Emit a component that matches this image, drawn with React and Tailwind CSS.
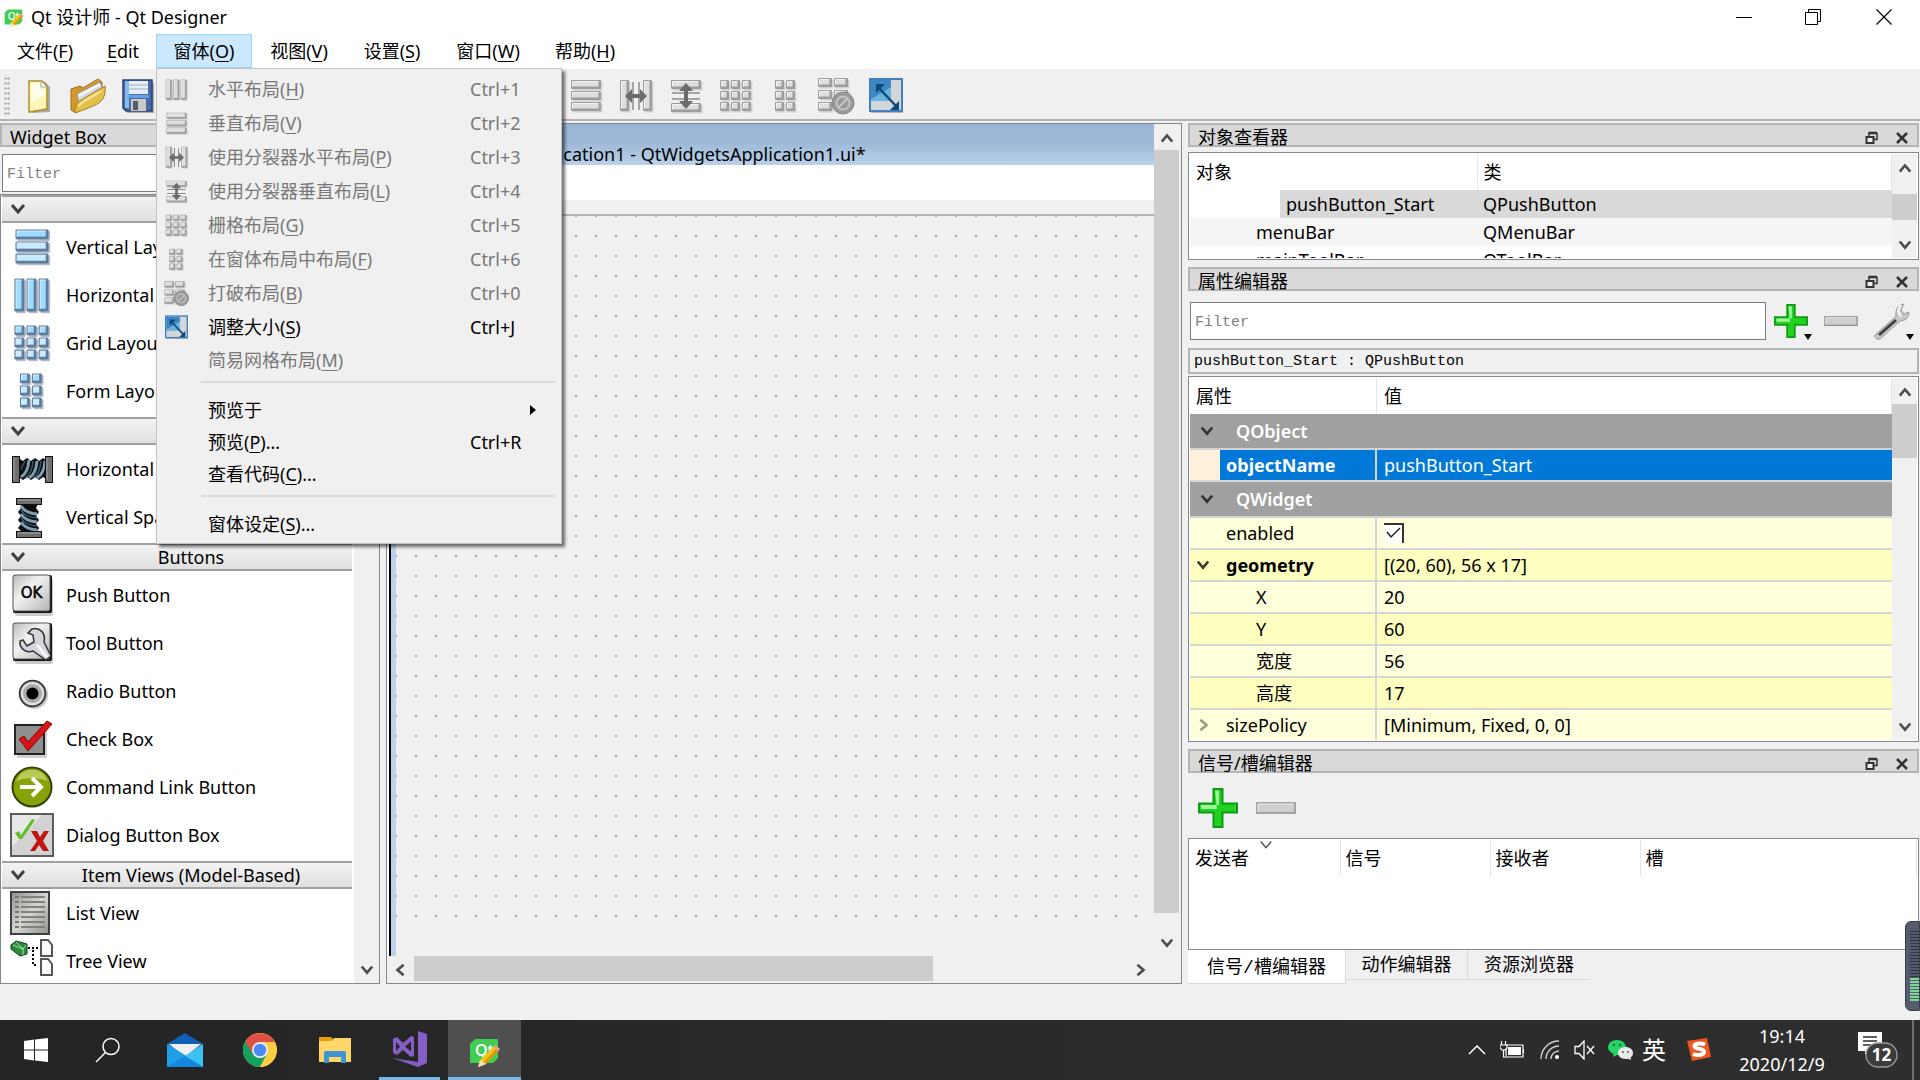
import React from "react";

const UI = "font-['Noto_Sans','Noto_Sans_CJK_SC',sans-serif]";
const MONO = "font-['Liberation_Mono','Noto_Sans_CJK_SC',monospace]";

/* ---------- layout glyphs ---------- */

const ROWS = [[5, 4, 30, 9], [5, 15, 30, 9], [5, 26, 30, 9]];
const COLS = [[4, 5, 9, 30], [15, 5, 9, 30], [26, 5, 9, 30]];
const GRID = [4, 15, 26].flatMap((y) => [4, 15, 26].map((x) => [x, y, 9, 9]));
const FORM = [4, 15, 26].flatMap((y) => [9, 20].map((x) => [x, y, 9, 9]));
const BREAK = [[2, 2, 14, 9], [18, 2, 14, 9], [2, 14, 14, 9], [18, 14, 14, 9], [2, 26, 14, 9]];

function Cells({ cells, tone = "gray" }) {
  const blue = tone === "blue";
  return cells.map(([x, y, w, h], i) => (
    <g key={i}>
      <rect x={x + 1.5} y={y + 1.5} width={w} height={h} rx="1" fill={blue ? "#b4bbc6" : "#d0d0d0"} />
      <rect x={x} y={y} width={w} height={h} rx="1" fill={blue ? "#5f7c9f" : "#9c9c9c"} />
      <rect x={x + 1.5} y={y + 1.5} width={w - 4} height={h - 4} fill={blue ? (y < 12 ? "#9bdcff" : "#c6ebff") : "#dedede"} />
      <path d={`M${x + 1.5} ${y + h - 2.5}V${y + 1.5}H${x + w - 2.5}`} fill="none" stroke={blue ? "#d9f2ff" : "#f4f4f4"} />
    </g>
  ));
}

function LayoutIcon({ kind, tone, className = "size-10" }) {
  return (
    <svg viewBox="0 0 40 40" className={className} aria-hidden="true">
      {kind === "rows" && <Cells cells={ROWS} tone={tone} />}
      {kind === "cols" && <Cells cells={COLS} tone={tone} />}
      {kind === "grid" && <Cells cells={GRID} tone={tone} />}
      {kind === "form" && <Cells cells={FORM} tone={tone} />}
      {kind === "hsplit" && (
        <>
          <Cells cells={[[4, 4, 9, 31], [27, 4, 9, 31]]} />
          <path d="M17 6v28M23 6v28" stroke="#8a8a8a" strokeWidth="1.5" />
          <path d="M9 20l7-7v5h8v-5l7 7-7 7v-5h-8v5z" fill="#6b6b6b" />
        </>
      )}
      {kind === "vsplit" && (
        <>
          <Cells cells={[[5, 4, 30, 9], [5, 27, 30, 9]]} />
          <path d="M6 17h28M6 23h28" stroke="#8a8a8a" strokeWidth="1.5" />
          <path d="M20 7l7 8h-5v10h5l-7 8-7-8h5V15h-5z" fill="#6b6b6b" />
        </>
      )}
      {kind === "break" && (
        <>
          <Cells cells={BREAK} />
          <circle cx="27" cy="27" r="11" fill="#9a9a9a" stroke="#848484" />
          <circle cx="27" cy="27" r="6.500" fill="none" stroke="#c4c4c4" strokeWidth="2" />
          <path d="M22.500 31.500l9-9" stroke="#c4c4c4" strokeWidth="2" />
        </>
      )}
      {kind === "adjust" && (
        <>
          <rect x="5" y="4" width="32" height="33" fill="#b5b5b5" />
          <rect x="4" y="3" width="32" height="32" fill="#d3d6d9" stroke="#3f7fc0" strokeWidth="2" />
          <rect x="5" y="4" width="20" height="21" fill="#69b4dc" />
          <path d="M5 4h20v7L5 23z" fill="#3f86c4" />
          <path d="M11 10l20 21" stroke="#0d4a78" strokeWidth="2.500" />
          <path d="M10 8h9l-9 9zM33 34h-9l9-9z" fill="#0d4a78" />
        </>
      )}
    </svg>
  );
}

/* ---------- toolbar file icons ---------- */

const NewIcon = () => (
  <svg viewBox="0 0 40 40" className="size-10" aria-hidden="true">
    <path d="M13 6h14l5 5v25l-18 1z" fill="#a9a9a9" />
    <path d="M11 5h13l5 5v23l-18 3z" fill="#fdf6b5" stroke="#b58f2a" strokeWidth="1.500" />
    <path d="M13 7h9v6h5v6L13 26z" fill="#fffdee" />
    <path d="M23 5l6 6h-6z" fill="#fff" stroke="#a8a8a8" />
  </svg>
);

const OpenIcon = () => (
  <svg viewBox="0 0 40 40" className="size-10" aria-hidden="true">
    <path d="M3 13l9-3 3 2L30 3l4 3v7L8 37l-5-3z" fill="#d49a2a" stroke="#9d7018" />
    <path d="M9 18L32 6l3 8L12 30z" fill="#f4f4f4" stroke="#8c8c8c" />
    <path d="M10 22L33 9l1 4-22 15z" fill="#d5d8dc" />
    <path d="M7 37c0-8 2-11 8-14l8-5 14-8c1 7-1 12-4 15-3 4-9 5-15 8z" fill="#e3bf4c" stroke="#a87c1c" />
    <path d="M11 30c2-4 14-10 23-15" stroke="#f6e7a0" strokeWidth="2" fill="none" />
  </svg>
);

const SaveIcon = () => (
  <svg viewBox="0 0 40 40" className="size-10" aria-hidden="true">
    <path d="M7 7h29v30H9z" fill="#a8adb5" />
    <path d="M5 4h29v31H8l-3-3z" fill="#4a6aa5" stroke="#2c4271" strokeWidth="1.500" />
    <path d="M7 5h4v27H7z" fill="#86b9ec" />
    <rect x="11" y="5" width="19" height="13" fill="#e6eef6" />
    <path d="M11 9h19M11 13h19" stroke="#9db0c6" />
    <rect x="9" y="19" width="22" height="3" fill="#5ea4e6" />
    <rect x="13" y="23" width="15" height="12" fill="#c9c9c9" />
    <rect x="15" y="25" width="5" height="9" fill="#555b68" />
  </svg>
);

const QtIcon = ({ className }) => (
  <svg viewBox="0 0 32 32" className={className} aria-hidden="true">
    <path d="M6 4h23v19l-5 5H1V9z" fill="#41cd52" />
    <text x="6" y="21" fontSize="16" fontWeight="600" fontFamily="Open Sans" fill="#fff">Qt</text>
    <path d="M26 10l5 4-14 15-7 3 1-7z" fill="#f4c614" />
    <path d="M26 10l5 4-2 2-5-4z" fill="#d9a0a0" />
    <path d="M29 16l-12 13-2-2 12-13z" fill="#e0920c" />
    <path d="M11 25l6 4-8 3z" fill="#f3e3c2" />
  </svg>
);

/* ---------- widget box icons ---------- */

const Frame = ({ children }) => (
  <svg viewBox="0 0 44 44" className="size-11" aria-hidden="true">{children}</svg>
);

const HSpacer = () => (
  <Frame>
    <path d="M10 12l3 2 4-3 4 3 4-3 4 3 4-3 3 2v19l-3-2-4 3-4-3-4 3-4-3-4 3-3-2z" fill="#0b0f12" />
    <path d="M11 30q7-4 8-17M19 31q7-4 8-17M27 31q7-4 8-17" stroke="#7f9fb2" strokeWidth="3" fill="none" />
    <path d="M11 22l4-8M15 31q7-4 8-17M23 31q7-4 8-17" stroke="#3d5a6b" strokeWidth="1.500" fill="none" />
    <rect x="2.500" y="9.500" width="7" height="26" fill="#6f6f6f" stroke="#111" />
    <rect x="35.500" y="9.500" width="7" height="26" fill="#6f6f6f" stroke="#111" />
    <path d="M4 11v22M37 11v22" stroke="#a6a6a6" />
  </Frame>
);

const VSpacer = () => (
  <Frame>
    <path d="M11 9h17l-2 4 3 4-3 4 3 4-3 4 3 4-2 3H11l-3-3 3-4-3-4 3-4-3-4 3-4z" fill="#0b0f12" />
    <path d="M11 11q4 7 16 8M11 19q4 7 16 8M11 27q4 7 16 8" stroke="#7f9fb2" strokeWidth="3" fill="none" />
    <path d="M11 15q4 7 16 8M11 23q4 7 16 8" stroke="#3d5a6b" strokeWidth="1.500" fill="none" />
    <rect x="6.500" y="3.500" width="25" height="6" fill="#6f6f6f" stroke="#111" />
    <rect x="6.500" y="36.500" width="25" height="6" fill="#6f6f6f" stroke="#111" />
    <path d="M8 5h22M8 38h22" stroke="#a6a6a6" />
  </Frame>
);

const Plate = () => (
  <>
    <defs>
      <linearGradient id="plate" x1="0" y1="0" x2="1" y2="1">
        <stop offset="0" stopColor="#b9b9b9" />
        <stop offset="0.400" stopColor="#f2f2f2" />
        <stop offset="1" stopColor="#b4b4b4" />
      </linearGradient>
    </defs>
    <rect x="5" y="5" width="38" height="38" rx="3" fill="#c9c9c9" />
    <rect x="3" y="2" width="39" height="38" rx="2" fill="#111" />
    <rect x="3" y="2" width="37" height="36" rx="2" fill="url(#plate)" stroke="#555" />
  </>
);

const PushIcon = () => (
  <Frame>
    <Plate />
    <text x="21.500" y="25" textAnchor="middle" fontSize="15" fontFamily="DejaVu Sans" fill="#000" stroke="#000" strokeWidth="0.500">OK</text>
  </Frame>
);

const ToolIcon = () => (
  <Frame>
    <Plate />
    <path d="M22 8c8-2 14 4 12 13l7 14-5 4-13-9c-8 3-14-4-13-10l3-1 4 6 7-4-1-7-5-2z" fill="#d5d5de" stroke="#333" strokeWidth="1.500" />
    <path d="M27 24l10 12" stroke="#f8f8f8" strokeWidth="3" />
  </Frame>
);

const RadioIcon = () => (
  <Frame>
    <circle cx="24" cy="26" r="14" fill="#c8c8c8" />
    <circle cx="22.500" cy="24.500" r="13" fill="#8f8f8f" stroke="#333" strokeWidth="1.500" />
    <circle cx="22.500" cy="24.500" r="10.500" fill="#a9a9a9" stroke="#e0e0e0" strokeWidth="2" />
    <circle cx="22.500" cy="24.500" r="6" fill="#000" />
  </Frame>
);

const CheckIcon = () => (
  <Frame>
    <rect x="7" y="11" width="30" height="30" fill="#cfcfcf" />
    <rect x="5" y="8" width="29" height="29" fill="#8f8f8f" stroke="#222" strokeWidth="2" />
    <path d="M9 22l5-3 4 6L37 4l5 3-24 27z" fill="#d81414" stroke="#7c0a0a" />
  </Frame>
);

const CommandIcon = () => (
  <Frame>
    <circle cx="22" cy="22" r="19.500" fill="#86a30a" stroke="#33400a" strokeWidth="2" />
    <path d="M6 16a17 17 0 0 1 32 0q-16-6-32 0z" fill="#b6cb5a" />
    <path d="M10 22h20M22 13l9 9-9 9" fill="none" stroke="#fff" strokeWidth="4" />
  </Frame>
);

const DialogIcon = () => (
  <Frame>
    <rect x="1" y="1" width="42" height="42" fill="#d2d2d2" stroke="#5c5c5c" strokeWidth="2" />
    <path d="M2 2h30L2 34z" fill="#e8e8e8" />
    <path d="M5 20l4-2 2 4L22 6l3 1-13 19H9z" fill="#5fbf26" />
    <path d="M21 18h6l3 6 4-6h5l-6 10 6 10h-6l-4-6-4 6h-5l7-10z" fill="#c11414" />
  </Frame>
);

const ListIcon = () => (
  <Frame>
    <defs>
      <linearGradient id="sheet" x1="0" y1="0" x2="1" y2="1">
        <stop offset="0" stopColor="#8f8f8c" />
        <stop offset="0.500" stopColor="#d6d6d2" />
        <stop offset="1" stopColor="#8f8f8c" />
      </linearGradient>
    </defs>
    <rect x="1" y="1" width="38" height="42" fill="url(#sheet)" stroke="#3f3f3f" strokeWidth="2" />
    <path d="M11 6h24M11 11h24M11 16h24M11 21h24M11 26h24M11 31h24M11 36h24" stroke="#80807c" strokeWidth="2" />
    <path d="M5 6h4M5 11h4M5 16h4M5 21h4M5 26h4M5 31h4M5 36h4" stroke="#77776f" strokeWidth="2" />
  </Frame>
);

const TreeIcon = () => (
  <Frame>
    <path d="M1 6l5-4 11 3v10l-7 2-9-7z" fill="#2c8a3c" stroke="#0c4317" />
    <path d="M3 6l10 4 3-4M6 3l7 7v6" stroke="#a6dfae" fill="none" />
    <path d="M18 9h10M23 11v15h5" stroke="#000" strokeWidth="2" strokeDasharray="2 2" fill="none" />
    <path d="M31 1h7l4 5v11H31z" fill="#fafafa" stroke="#555" strokeWidth="2" />
    <path d="M31 20h7l4 5v11H31z" fill="#fafafa" stroke="#555" strokeWidth="2" />
  </Frame>
);

/* ---------- small shared parts ---------- */

const Chevron = ({ dir = "down", className = "w-3.5", color = "#4d4d4d", stroke = 3 }) => {
  const d = { down: "M2 4l6 7 6-7", up: "M2 11l6-7 6 7", left: "M11 2L4 8l7 6", right: "M5 2l7 6-7 6" }[dir];
  return (
    <svg viewBox="0 0 16 16" className={className} aria-hidden="true">
      <path d={d} fill="none" stroke={color} strokeWidth={stroke} />
    </svg>
  );
};

function VScroll({ before, size, after, hideThumb }) {
  return (
    <div className="flex w-[25px] shrink-0 flex-col bg-[#f0f0f0]">
      <button className="flex h-[26px] shrink-0 items-center justify-center pt-1" aria-label="Scroll up">{!hideThumb && <Chevron dir="up" />}</button>
      <div className="flex min-h-0 flex-1 flex-col">
        <div style={{ flexGrow: before }} />
        <div className={hideThumb ? "" : "bg-[#cdcdcd]"} style={{ flexGrow: size }} />
        <div style={{ flexGrow: after }} />
      </div>
      <button className="flex h-[26px] shrink-0 items-center justify-center" aria-label="Scroll down"><Chevron /></button>
    </div>
  );
}

function DockTitle({ title, buttons = true }) {
  return (
    <div className="flex h-6 shrink-0 items-center border-2 border-[#b4b4b4] bg-[#d9d9d9] pl-2 pr-2">
      <h2 className="flex-1 pt-1 text-[18px] leading-6">{title}</h2>
      {buttons && (
        <div className="flex items-center gap-4 pt-1.5">
          <button aria-label="Float">
            <svg viewBox="0 0 14 14" className="size-3.5" aria-hidden="true">
              <path d="M4 2.500h8v6h-3M4 1.500h8M4 1v4" fill="none" stroke="#333" strokeWidth="1.500" />
              <rect x="1.500" y="6" width="7" height="6" fill="#eee" stroke="#333" strokeWidth="2" />
            </svg>
          </button>
          <button aria-label="Close">
            <svg viewBox="0 0 14 14" className="size-3.5" aria-hidden="true"><path d="M2 2l10 10M12 2L2 12" stroke="#333" strokeWidth="2.500" /></svg>
          </button>
        </div>
      )}
    </div>
  );
}

const Plus = ({ className }) => (
  <svg viewBox="0 0 40 40" className={className} aria-hidden="true">
    <path d="M15.500 1h9v14.500H39v9H24.500V39h-9V24.500H1v-9h14.500z" fill="#1fd21f" stroke="#0f9a14" strokeWidth="2" />
    <path d="M17 2.500h4V17H3v4h16z" fill="#a4f59c" />
  </svg>
);

const Minus = ({ className }) => (
  <svg viewBox="0 0 40 12" className={className} aria-hidden="true">
    <rect x="1" y="1" width="38" height="10" fill="#cfcfcf" stroke="#8e8e8e" strokeWidth="1.500" />
    <path d="M2 10V2h36" fill="none" stroke="#f4f4f4" />
  </svg>
);

const Mn = ({ text, k }) => {
  if (!k) return <span>{text}</span>;
  const i = text.indexOf(k);
  return (
    <span>
      {text.slice(0, i)}
      <span className="underline decoration-1 underline-offset-3">{k}</span>
      {text.slice(i + 1)}
    </span>
  );
};

/* ---------- menu ---------- */

const MENU = [
  { t: "水平布局(H)", k: "H", s: "Ctrl+1", icon: "cols", off: true },
  { t: "垂直布局(V)", k: "V", s: "Ctrl+2", icon: "rows", off: true },
  { t: "使用分裂器水平布局(P)", k: "P", s: "Ctrl+3", icon: "hsplit", off: true },
  { t: "使用分裂器垂直布局(L)", k: "L", s: "Ctrl+4", icon: "vsplit", off: true },
  { t: "栅格布局(G)", k: "G", s: "Ctrl+5", icon: "grid", off: true },
  { t: "在窗体布局中布局(F)", k: "F", s: "Ctrl+6", icon: "form", off: true },
  { t: "打破布局(B)", k: "B", s: "Ctrl+0", icon: "break", off: true },
  { t: "调整大小(S)", k: "S", s: "Ctrl+J", icon: "adjust" },
  { t: "简易网格布局(M)", k: "M", off: true, short: true },
  null,
  { t: "预览于", sub: true, short: true },
  { t: "预览(P)...", k: "P", s: "Ctrl+R", short: true },
  { t: "查看代码(C)...", k: "C", short: true },
  null,
  { t: "窗体设定(S)...", k: "S", short: true },
];

function FormMenu() {
  return (
    <div role="menu" className="absolute left-0 top-full z-20 w-[406px] border border-[#c3c3c3] bg-[#f0f0f0] pb-[3px] pt-[3px] text-[18px] leading-6 shadow-[3px_3px_3px_rgba(0,0,0,0.55)]">
      {MENU.map((m, i) =>
        m === null ? (
          <div key={i} role="separator" className="h-[18px] pl-11 pr-1.5 pt-[5px]">
            <div className="h-0.5 bg-[#dadada]" />
          </div>
        ) : (
          <button
            key={i}
            role="menuitem"
            disabled={m.off}
            className={`flex w-full items-center pl-1.5 text-left ${m.short ? "h-8" : "h-[34px]"} ${m.off ? "text-[#787878]" : "text-black"}`}
          >
            <span className="w-[45px] shrink-0">{m.icon && <LayoutIcon kind={m.icon} className="size-[27px]" />}</span>
            <span className="flex-1"><Mn text={m.t} k={m.k} /></span>
            {m.s && <span className="w-[91px]">{m.s}</span>}
            {m.sub && <svg viewBox="0 0 6 10" className="mr-[25px] w-1.5" aria-hidden="true"><path d="M0 0l6 5-6 5z" /></svg>}
          </button>
        )
      )}
    </div>
  );
}

const BAR = [
  ["文件(F)", "F", "w-[90px]"],
  ["Edit", "E", "w-[66px]"],
  ["窗体(O)", "O", "w-24"],
  ["视图(V)", "V", "w-[94px]"],
  ["设置(S)", "S", "w-[92px]"],
  ["窗口(W)", "W", "w-[100px]"],
  ["帮助(H)", "H", "w-[94px]"],
];

function MenuBar() {
  return (
    <nav className="flex h-[34px] shrink-0 bg-white text-[18px] leading-6" aria-label="Menu">
      {BAR.map(([t, k, w]) => {
        const open = k === "O";
        return (
          <div key={k} className={`relative flex ${w}`}>
            <button className={`flex-1 text-center ${open ? "border border-[#99d1ff] bg-[#cce8ff]" : ""}`} aria-expanded={open}>
              <Mn text={t} k={k} />
            </button>
            {open && <FormMenu />}
          </div>
        );
      })}
    </nav>
  );
}

/* ---------- left dock ---------- */

const GROUPS = [
  ["Layouts", [
    ["Vertical Layout", <LayoutIcon kind="rows" tone="blue" className="size-11" />],
    ["Horizontal Layout", <LayoutIcon kind="cols" tone="blue" className="size-11" />],
    ["Grid Layout", <LayoutIcon kind="grid" tone="blue" className="size-11" />],
    ["Form Layout", <LayoutIcon kind="form" tone="blue" className="size-11" />],
  ]],
  ["Spacers", [["Horizontal Spacer", <HSpacer />], ["Vertical Spacer", <VSpacer />]]],
  ["Buttons", [
    ["Push Button", <PushIcon />],
    ["Tool Button", <ToolIcon />],
    ["Radio Button", <RadioIcon />],
    ["Check Box", <CheckIcon />],
    ["Command Link Button", <CommandIcon />],
    ["Dialog Button Box", <DialogIcon />],
  ]],
  ["Item Views (Model-Based)", [["List View", <ListIcon />], ["Tree View", <TreeIcon />]]],
];

function WidgetBox() {
  return (
    <aside className="flex w-[380px] shrink-0 flex-col">
      <DockTitle title="Widget Box" buttons={false} />
      <input
        aria-label="Filter widgets"
        placeholder="Filter"
        className={`mx-0.5 mt-[7px] h-[38px] shrink-0 border border-[#7a7a7a] bg-white px-1 pt-0.5 text-[15px] placeholder:text-[#808080] ${MONO}`}
      />
      <div className="mt-0.5 flex min-h-0 flex-1 border border-[#828790] bg-white">
        <div className="min-w-0 flex-1 overflow-hidden pl-px pr-0.5">
          {GROUPS.map(([name, items], gi) => (
            <section key={name} className={gi ? "mt-0.5" : ""}>
              <button className="flex h-7 w-full items-center border-y-2 border-[#a0a0a0] bg-linear-to-b from-[#f3f3f3] to-[#e0e0e0] pl-2 text-[18px] leading-6">
                <Chevron className="w-4 shrink-0" color="#404040" />
                <span className="flex-1 pl-1 text-center">{name}</span>
              </button>
              <ul>
                {items.map(([label, icon]) => (
                  <li key={label} className="flex h-12 items-center gap-3 pl-2 text-[18px] leading-6">
                    <span className="shrink-0">{icon}</span>
                    <span>{label}</span>
                  </li>
                ))}
              </ul>
            </section>
          ))}
        </div>
        <VScroll before={0} size={60} after={40} hideThumb />
      </div>
    </aside>
  );
}

/* ---------- form canvas ---------- */

function FormArea() {
  return (
    <main className="flex min-w-0 flex-1 flex-col border border-[#828790] bg-white">
      <div className="flex min-h-0 flex-1">
        <div className="flex min-w-0 flex-1 border-l-2 border-white">
          <div className="flex min-w-0 flex-1 border-l-2 border-black bg-[#b9d1ea] pl-[5px]">
            <div className="flex min-w-0 flex-1 flex-col bg-[#f0f0f0]">
              <div className="-ml-[5px] h-[41px] shrink-0 overflow-hidden bg-linear-to-b from-[#9bb7d5] from-40% to-[#b9d1ea] pl-10 pt-[18px]">
                <div className="text-[18px] leading-6">QtWidgetsApplication1 - QtWidgetsApplication1.ui*</div>
              </div>
              <div className="h-9 shrink-0 border-b border-[#f0f0f0] bg-white" />
              <div className="h-[15px] shrink-0 border-b-2 border-[#b4b4b4]" />
              <div className="mb-[37px] mr-4 flex-1 bg-[conic-gradient(from_270deg_at_2px_2px,#a0a0a0_90deg,transparent_0)] bg-[length:20px_20px] bg-[position:-1px_-1px]" />
            </div>
          </div>
        </div>
        <VScroll before={0} size={763} after={17} />
        <div className="w-0.5 bg-[#f0f0f0]" />
      </div>
      <div className="flex h-[27px] shrink-0 bg-[#f0f0f0]">
        <button className="flex w-[27px] items-center justify-center" aria-label="Scroll left"><Chevron dir="left" /></button>
        <div className="flex flex-1 pb-0.5">
          <div className="bg-[#cdcdcd]" style={{ flexGrow: 520 }} />
          <div style={{ flexGrow: 193 }} />
        </div>
        <button className="flex w-[27px] items-center justify-center" aria-label="Scroll right"><Chevron dir="right" /></button>
        <div className="w-7" />
      </div>
    </main>
  );
}

/* ---------- right docks ---------- */

function ObjectInspector() {
  return (
    <section className="shrink-0">
      <DockTitle title="对象查看器" />
      <div className="mt-[5px] flex h-[108px] border border-[#828790] bg-white p-px">
        <div className="min-w-0 flex-1 overflow-hidden">
          <table className="w-full table-fixed border-collapse text-left text-[18px] leading-6">
            <colgroup><col className="w-[287px]" /><col /></colgroup>
            <thead>
              <tr className="h-9">
                <th className="border-r border-[#e5e5e5] p-0 pl-1.5 font-normal">对象</th>
                <th className="border-r border-[#e5e5e5] p-0 pl-1.5 font-normal">类</th>
              </tr>
            </thead>
            <tbody>
              <tr className="h-7 bg-[#d9d9d9]">
                <td className="p-0"><div className="border-l-[90px] border-white pl-1.5 leading-7">pushButton_Start</div></td>
                <td className="p-0 pl-1.5">QPushButton</td>
              </tr>
              <tr className="h-7 bg-[#f5f5f5]">
                <td className="p-0 pl-[66px]">menuBar</td>
                <td className="p-0 pl-1.5">QMenuBar</td>
              </tr>
              <tr className="h-7">
                <td className="p-0 pl-[66px]">mainToolBar</td>
                <td className="p-0 pl-1.5">QToolBar</td>
              </tr>
            </tbody>
          </table>
        </div>
        <VScroll before={14} size={26} after={12} />
      </div>
    </section>
  );
}

const PROPS = [
  { group: "QObject" },
  { name: "objectName", value: "pushButton_Start", selected: true },
  { group: "QWidget" },
  { name: "enabled", check: true },
  { name: "geometry", value: "[(20, 60), 56 x 17]", bold: true, dark: true, arrow: "down" },
  { name: "X", value: "20", deep: true },
  { name: "Y", value: "60", deep: true, dark: true },
  { name: "宽度", value: "56", deep: true },
  { name: "高度", value: "17", deep: true, dark: true },
  { name: "sizePolicy", value: "[Minimum, Fixed, 0, 0]", arrow: "right" },
];

function PropertyRow({ p }) {
  if (p.group)
    return (
      <tr className="h-9 bg-[#a0a0a0]">
        <th colSpan="2" scope="rowgroup" className="border-b-2 border-[#d2d2d2] p-0 text-left font-semibold text-white">
          <div className="flex items-center gap-[22px] pl-2.5"><Chevron className="w-3.5" color="#333" /><span>{p.group}</span></div>
        </th>
      </tr>
    );
  const bg = p.selected ? "bg-[#0078d7] text-white" : p.dark ? "bg-[#ffffbf]" : "bg-[#ffffdc]";
  return (
    <tr className={`h-8 ${bg}`}>
      <th scope="row" className={`border-b-2 border-r-2 border-[#d6d6d6] p-0 text-left ${p.selected || p.bold ? "font-bold" : "font-normal"}`}>
        <div className="flex h-[30px] items-center">
          <span className={`flex h-full w-[30px] shrink-0 items-center pl-1.5 ${p.selected ? "bg-[#fff0dc]" : ""}`}>
            {p.arrow && <Chevron dir={p.arrow} color={p.arrow === "right" ? "#9b9b80" : "#3d3d2d"} />}
          </span>
          <span className={p.deep ? "pl-9" : "pl-1.5"}>{p.name}</span>
        </div>
      </th>
      <td className="border-b-2 border-[#d6d6d6] p-0 pl-[7px]">
        {p.check ? (
          <span className="grid size-5 place-items-center">
            <input type="checkbox" defaultChecked aria-label="enabled" className="col-start-1 row-start-1 size-5 appearance-none border-r-2 border-t-2 border-[#333] bg-white" />
            <svg viewBox="0 0 16 12" className="pointer-events-none col-start-1 row-start-1 w-4" aria-hidden="true"><path d="M1 5l4 5 9-9" fill="none" stroke="#222" strokeWidth="1.500" /></svg>
          </span>
        ) : (
          p.value
        )}
      </td>
    </tr>
  );
}

const DropMark = () => (
  <svg viewBox="0 0 8 6" className="absolute -right-1 bottom-0 w-2" aria-hidden="true"><path d="M0 0h8L4 6z" /></svg>
);

function PropertyEditor() {
  return (
    <section className="mt-[7px] flex min-h-0 flex-1 flex-col">
      <DockTitle title="属性编辑器" />
      <div className="mt-[11px] flex h-[38px] shrink-0 items-center pl-0.5 pr-[9px]">
        <input aria-label="Filter properties" placeholder="Filter" className={`h-full min-w-0 flex-1 border border-[#7a7a7a] bg-white px-1 pt-0.5 text-[15px] placeholder:text-[#808080] ${MONO}`} />
        <button className="relative ml-2 flex h-full items-center" aria-label="Add property"><Plus className="size-[34px]" /><DropMark /></button>
        <button className="ml-4 flex h-full items-center" aria-label="Remove property"><Minus className="w-[34px]" /></button>
        <button className="relative ml-4 flex h-full items-center" aria-label="Configure">
          <svg viewBox="0 0 36 38" className="h-[38px] w-9" aria-hidden="true">
            <path d="M1 33L22 14c-1-6 2-11 8-12l-3 6 3 4 5-2c0 6-4 9-9 9L6 37c-3 1-6-1-5-4z" fill="#c6c6c6" stroke="#9b9b9b" />
            <path d="M5 33l17-15" stroke="#3f3f3f" strokeWidth="3" />
            <path d="M27 3l-3 6 3 6" stroke="#fafafa" strokeWidth="2" fill="none" />
          </svg>
          <DropMark />
        </button>
      </div>
      <div className={`mt-2 flex h-[26px] shrink-0 items-center border-2 border-[#b4b4b4] pl-1 pt-0.5 text-[15px] ${MONO}`}>pushButton_Start : QPushButton</div>
      <div className="mt-0.5 flex min-h-0 flex-1 border border-[#828790] bg-white p-px">
        <div className="min-w-0 flex-1 overflow-hidden">
          <table className="w-full table-fixed border-separate border-spacing-0 text-[18px] leading-6">
            <colgroup><col className="w-[187px]" /><col /></colgroup>
            <thead>
              <tr className="h-9 text-left">
                <th className="border-r border-[#e5e5e5] p-0 pl-1.5 font-normal">属性</th>
                <th className="border-r border-[#e5e5e5] p-0 pl-[7px] font-normal">值</th>
              </tr>
            </thead>
            <tbody>{PROPS.map((p) => <PropertyRow key={p.group || p.name} p={p} />)}</tbody>
          </table>
        </div>
        <VScroll before={0} size={54} after={255} />
      </div>
    </section>
  );
}

function SignalEditor() {
  return (
    <section className="mt-[7px] shrink-0">
      <DockTitle title="信号/槽编辑器" />
      <div className="mt-[15px] flex h-10 items-center gap-[18px] pl-2.5">
        <button aria-label="Add connection"><Plus className="size-10" /></button>
        <button aria-label="Remove connection"><Minus className="w-10" /></button>
      </div>
      <div className="mt-2.5 h-28 border border-[#828790] bg-white p-px">
        <table className="w-full table-fixed border-collapse text-left text-[18px] leading-6">
          <colgroup><col className="w-[150px]" /><col className="w-[150px]" /><col className="w-[150px]" /><col /></colgroup>
          <thead>
            <tr className="h-9">
              {["发送者", "信号", "接收者", "槽"].map((h, i) => (
                <th key={h} className="relative border-r border-[#e5e5e5] p-0 pl-[5px] font-normal">
                  {i === 0 && <Chevron className="absolute left-[69px] -top-0.5 w-3.5" stroke={1.5} />}
                  {h}
                </th>
              ))}
            </tr>
          </thead>
        </table>
      </div>
      <div role="tablist" className={`flex h-[34px] items-start text-[18px] leading-6 ${MONO}`}>
        <button role="tab" aria-selected="true" className="h-[34px] w-[158px] border-b border-r border-[#d9d9d9] bg-white pt-0.5">信号/槽编辑器</button>
        <button role="tab" aria-selected="false" className="h-[30px] w-[122px] border-b border-r border-[#d9d9d9] pt-0.5">动作编辑器</button>
        <button role="tab" aria-selected="false" className="h-[30px] w-[122px] border-b border-[#d9d9d9] pt-0.5">资源浏览器</button>
      </div>
    </section>
  );
}

/* ---------- taskbar ---------- */

const MailIcon = () => (
  <svg viewBox="0 0 36 34" className="w-9" aria-hidden="true">
    <path d="M0 11L18 0l18 11v6H0z" fill="#0f5fb5" />
    <path d="M2 11h32L18 24z" fill="#f0f0f2" />
    <path d="M0 11l36 22v1H0z" fill="#1f9fe6" />
    <path d="M36 11L18 23l18 11z" fill="#3cc3f4" />
    <path d="M0 34l18-11 18 11z" fill="#1287dc" />
  </svg>
);

const ChromeIcon = () => (
  <svg viewBox="0 0 34 34" className="size-[34px]" aria-hidden="true">
    <circle cx="17" cy="17" r="17" fill="#ffcd40" />
    <path d="M17 17L2.300 8.500A17 17 0 0 0 17 34l8-14z" fill="#14a05e" />
    <path d="M17 9h14.800A17 17 0 0 0 2.300 8.500L9.500 21z" fill="#dd5044" />
    <path d="M24.400 20L17 34a17 17 0 0 0 14.800-25H17z" fill="#ffcd40" />
    <circle cx="17" cy="17" r="8" fill="#f1f1f1" />
    <circle cx="17" cy="17" r="6.300" fill="#4c8bf5" />
  </svg>
);

const FolderIcon = () => (
  <svg viewBox="0 0 32 26" className="w-8" aria-hidden="true">
    <path d="M0 0h12l3 3h-1v4H0z" fill="#e3a008" />
    <path d="M0 4h13l2-3h17v24H0z" fill="#ffd667" />
    <path d="M5 26V16q0-2 2-2h18q2 0 2 2v10h-5v-6H10v6z" fill="#3d95d6" />
  </svg>
);

const VSIcon = () => (
  <svg viewBox="0 0 36 36" className="size-9" aria-hidden="true">
    <path d="M26 0l9 3v29l-9 4L0 27l26 4z" fill="#865fc5" />
    <path d="M1 8l4-2 6 6 8-7 3 1v19l-3 1-8-7-6 5-4-2zM4 11v9l4-4.500zM19 10.500l-6 5 6 5z" fill="#865fc5" fillRule="evenodd" />
  </svg>
);

function Taskbar() {
  return (
    <footer className="flex h-[60px] shrink-0 items-stretch bg-linear-to-r from-[#242424] to-[#2e2e2e] text-white">
      <button className="flex w-[72px] items-center justify-center" aria-label="Start">
        <svg viewBox="0 0 24 24" className="size-6" aria-hidden="true"><path d="M0 3l10-1.500V11.500H0zM11 1.400L24 0v11.500H11zM0 12.500h10v10L0 21zM11 12.500h13V24l-13-1.600z" fill="#fff" /></svg>
      </button>
      <button className="mr-1 flex w-[72px] items-center justify-center" aria-label="Search">
        <svg viewBox="0 0 26 26" className="size-[26px]" aria-hidden="true"><circle cx="16" cy="9.500" r="8" fill="none" stroke="#fff" strokeWidth="1.500" /><path d="M10.500 15.500L1 25" stroke="#fff" strokeWidth="1.500" /></svg>
      </button>
      <div className="flex gap-0.5">
        <button className="flex w-[73px] items-center justify-center" aria-label="Mail"><MailIcon /></button>
        <button className="flex w-[73px] items-center justify-center" aria-label="Chrome"><ChromeIcon /></button>
        <button className="flex w-[73px] items-center justify-center" aria-label="Explorer"><FolderIcon /></button>
        <button className="mx-1.5 flex w-[61px] items-center justify-center border-b-[3px] border-[#76b9ed]" aria-label="Visual Studio"><VSIcon /></button>
        <button className="flex w-[73px] items-center justify-center border-b-[3px] border-[#76b9ed] bg-[#4f4f4f] pt-1" aria-label="Qt Designer"><QtIcon className="w-8" /></button>
      </div>
      <div className="flex-1" />
      <div className="flex items-center">
        <svg viewBox="0 0 18 10" className="mr-3.5 w-[18px]" aria-hidden="true"><path d="M1 9l8-8 8 8" fill="none" stroke="#fff" strokeWidth="1.500" /></svg>
        <svg viewBox="0 0 24 18" className="mr-4 w-6" aria-hidden="true">
          <path d="M6 4h17v12H6z" fill="none" stroke="#fff" strokeWidth="1.200" /><path d="M8 6h13v8H8zM23 8h1v4h-1z" fill="#fff" />
          <path d="M1.500 0v4M5.500 0v4M0 4h7v3L5 9H2L0 7zM3.500 9v7H6" stroke="#fff" fill="#2b2b2b" strokeWidth="1.200" />
        </svg>
        <svg viewBox="0 0 20 20" className="mr-3.5 w-5" aria-hidden="true">
          <path d="M1 19A18 18 0 0 1 19 1M6 19A13 13 0 0 1 19 6M11 19a8 8 0 0 1 8-8" fill="none" stroke="#cfcfcf" strokeWidth="1.400" /><circle cx="17" cy="17" r="2" fill="#fff" />
        </svg>
        <svg viewBox="0 0 22 20" className="mr-3 w-[22px]" aria-hidden="true">
          <path d="M1 6.500h4L10 1v18l-5-5.500H1zM13 6l7 8M20 6l-7 8" fill="none" stroke="#fff" strokeWidth="1.300" />
        </svg>
        <svg viewBox="0 0 26 22" className="mr-2 w-[26px]" aria-hidden="true">
          <path d="M9 1c5 0 9 3 9 7.500S14 16 9 16l-4 2 .500-3C2 13 0 11 0 8.500 0 4 4 1 9 1z" fill="#25d366" />
          <path d="M17.500 8c4.500 0 7.500 2.500 7.500 6 0 2-1 3.500-2.500 4.500L23 21l-3-1.200c-6 1-10-2-10-5.800C10 10.500 13 8 17.500 8z" fill="#e9e9e9" />
          <circle cx="6" cy="6" r="1.200" fill="#146c36" /><circle cx="12" cy="6" r="1.200" fill="#146c36" />
          <circle cx="15" cy="13" r="1" fill="#666" /><circle cx="20" cy="13" r="1" fill="#666" />
        </svg>
        <span className="mr-5 text-[24px] leading-8">英</span>
        <svg viewBox="0 0 26 24" className="mr-[22px] w-[26px]" aria-hidden="true">
          <path d="M1 3L21 0l4 19-19 4z" fill="#f0561d" />
          <path d="M19 6.500c-5-2-11-1-10.500 2 .500 3 9 1.500 9.500 5 .500 3.500-6 4.500-11 2.500" fill="none" stroke="#fff" strokeWidth="4" />
        </svg>
        <div className="w-[96px] text-center text-[18px] leading-7">
          <div>19:14</div>
          <div>2020/12/9</div>
        </div>
        <button className="ml-7 mr-3.5 flex h-full items-center" aria-label="Notifications">
          <svg viewBox="0 0 40 36" className="w-10" aria-hidden="true">
            <path d="M0 0h24v19H11l-4 4v-4H0z" fill="#fff" />
            <path d="M5 5h14M5 9h14M5 13h14" stroke="#2b2b2b" strokeWidth="1.300" />
            <rect x="8" y="11" width="31" height="24" rx="12" fill="#3c3c3c" stroke="#9a9a9a" strokeWidth="1.300" />
            <text x="23.500" y="29" textAnchor="middle" fontSize="17" fontWeight="700" fontFamily="Open Sans" fill="#fff">12</text>
          </svg>
        </button>
        <div className="mr-1.5 h-full w-0.5 bg-[#6e6e6e]" />
      </div>
    </footer>
  );
}

/* ---------- page ---------- */

const TOOLS = [["rows", "垂直布局"], ["hsplit", "使用分裂器水平布局"], ["vsplit", "使用分裂器垂直布局"], ["grid", "栅格布局"], ["form", "在窗体布局中布局"], ["break", "打破布局"], ["adjust", "调整大小"]];

export default function App() {
  return (
    <div className={`relative flex h-screen flex-col overflow-hidden bg-[#f0f0f0] text-black ${UI}`}>
      <header className="flex h-[34px] shrink-0 items-center bg-white pl-1">
        <QtIcon className="mr-[7px] w-5" />
        <h1 className="flex-1 text-[18px] leading-6">Qt 设计师 - Qt Designer</h1>
        <button className="flex h-full w-[69px] items-center justify-center" aria-label="Minimize">
          <svg viewBox="0 0 16 16" className="w-4" aria-hidden="true"><path d="M0 8.500h16" stroke="#000" /></svg>
        </button>
        <button className="flex h-full w-[69px] items-center justify-center" aria-label="Restore">
          <svg viewBox="0 0 16 16" className="w-4" aria-hidden="true"><path d="M.500 3.500h12v12H.500zM3.500 3.500v-3h12v12h-3" fill="none" stroke="#000" /></svg>
        </button>
        <button className="flex h-full w-[73px] items-center justify-center" aria-label="Close">
          <svg viewBox="0 0 16 16" className="w-4" aria-hidden="true"><path d="M.500 .500l15 15M15.500 .500l-15 15" stroke="#000" strokeWidth="1.200" /></svg>
        </button>
      </header>
      <MenuBar />
      <div className="h-0.5 shrink-0 border-b border-[#f0f0f0] bg-white" />
      <div role="toolbar" className="flex h-[51px] shrink-0 items-center border-b-2 border-[#b4b4b4] pl-1 pt-0.5">
        <div className="mr-2 h-10 w-1.5 bg-[radial-gradient(circle,#b8b8b8_1px,transparent_1.5px)] bg-[length:3px_5px]" />
        <div className="flex gap-2.5">
          <button aria-label="New"><NewIcon /></button>
          <button aria-label="Open"><OpenIcon /></button>
          <button aria-label="Save"><SaveIcon /></button>
        </div>
        <div className="ml-[408px] flex gap-2.5">
          {TOOLS.map(([kind, label]) => (
            <button key={kind} aria-label={label}><LayoutIcon kind={kind} /></button>
          ))}
        </div>
      </div>
      <div className="flex min-h-0 flex-1 gap-1.5 pr-px pt-0.5">
        <WidgetBox />
        <FormArea />
        <div className="flex w-[731px] shrink-0 flex-col">
          <ObjectInspector />
          <PropertyEditor />
          <SignalEditor />
        </div>
      </div>
      <div className="h-9 shrink-0" />
      <Taskbar />
      <div className="absolute bottom-[69px] right-0 flex h-[90px] w-[15px] flex-col justify-center rounded-l-md border border-[#3a3f4c] bg-[#565c6c] pl-1">
        <div className="h-[47px] bg-[repeating-linear-gradient(#2f333e_0_1px,#565c6c_1px_3px)]" />
        <div className="h-6 bg-[repeating-linear-gradient(#7fd69a_0_2px,#565c6c_2px_3px)]" />
      </div>
    </div>
  );
}
